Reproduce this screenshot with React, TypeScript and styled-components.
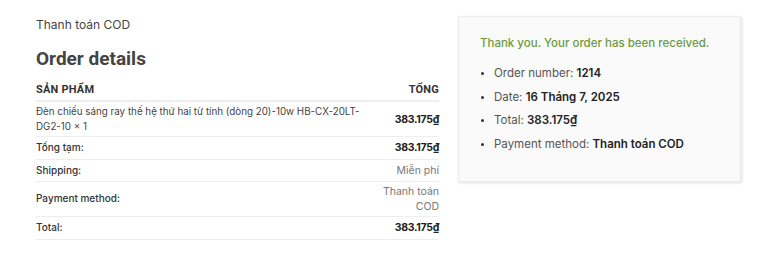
import styled, { createGlobalStyle } from 'styled-components';

const GlobalStyle = createGlobalStyle`
  html, body {
    margin: 0;
    padding: 0;
    background: #fff;
  }
  body {
    font-family: Inter, "Noto Sans", sans-serif;
    color: #333;
  }
`;

const Page = styled.div`
  display: flex;
  align-items: flex-start;
  gap: 19px;
  padding: 16px 0 0 36px;
`;

const Details = styled.section`
  width: 403px;
  padding-top: 1px;
  display: flex;
  flex-direction: column;
`;

const Method = styled.p`
  margin: 0;
  font-size: 12px;
  line-height: 16px;
  color: #444;
`;

const Heading = styled.h2`
  margin: 14px 0 0;
  font-family: Roboto, "Liberation Sans", sans-serif;
  font-size: 19px;
  line-height: 24px;
  font-weight: 700;
  color: #444;
`;

const Table = styled.table`
  width: 100%;
  margin-top: 12px;
  border-collapse: collapse;
`;

const HeadCell = styled.th<{ $right?: boolean }>`
  padding: 0 0 3px;
  text-align: ${({ $right }) => ($right ? 'right' : 'left')};
  font-family: Roboto, "Liberation Sans", sans-serif;
  font-size: 11px;
  line-height: 14px;
  font-weight: 700;
  text-transform: uppercase;
  letter-spacing: 0.2px;
  color: #333;
  border-bottom: 2px solid #eee;
`;

const Row = styled.tr`
  border-bottom: 1px solid #eee;
`;

const Cell = styled.td`
  padding: 2px 0;
  vertical-align: middle;
  font-size: 9.8px;
  line-height: 15px;
  color: #444;
`;

const Label = styled.th`
  padding: 2px 0;
  text-align: left;
  font-size: 10px;
  line-height: 17.5px;
  font-weight: 500;
  color: #333;
`;

const Value = styled.td<{ $bold?: boolean }>`
  padding: 2px 0;
  text-align: right;
  font-size: 10.5px;
  line-height: 15px;
  font-weight: ${({ $bold }) => ($bold ? 700 : 400)};
  letter-spacing: ${({ $bold }) => ($bold ? '-0.3px' : '0')};
  color: ${({ $bold }) => ($bold ? '#222' : '#777')};
  width: 70px;
`;

const Received = styled.aside`
  width: 283px;
  box-sizing: border-box;
  padding: 18px 21px 21px;
  background: #fafafa;
  border: 1px solid #ececec;
  box-shadow: 1px 1px 3px rgba(0, 0, 0, 0.12);
`;

const Thanks = styled.p`
  margin: 0;
  font-size: 11.5px;
  line-height: 16px;
  font-weight: 500;
  color: #6a9a43;
`;

const Facts = styled.ul`
  margin: 14px 0 0;
  padding-left: 14px;
  list-style: disc;
`;

const Fact = styled.li`
  font-size: 11.5px;
  line-height: 16px;
  color: #555;
  margin-bottom: 7.7px;

  &::marker {
    color: #333;
    font-size: 9px;
  }

  strong {
    font-weight: 600;
    color: #222;
  }
`;

const totals = [
  { label: 'Tổng tạm:', value: '383.175₫', bold: true },
  { label: 'Shipping:', value: 'Miễn phí', bold: false },
  { label: 'Payment method:', value: 'Thanh toán COD', bold: false },
  { label: 'Total:', value: '383.175₫', bold: true },
];

const facts = [
  { label: 'Order number:', value: '1214' },
  { label: 'Date:', value: '16 Tháng 7, 2025' },
  { label: 'Total:', value: '383.175₫' },
  { label: 'Payment method:', value: 'Thanh toán COD' },
];

const App = () => {
  return (
    <>
      <GlobalStyle />
      <Page>
        <Details>
          <Method>Thanh toán COD</Method>
          <Heading>Order details</Heading>
          <Table>
            <thead>
              <tr>
                <HeadCell>Sản phẩm</HeadCell>
                <HeadCell $right>Tổng</HeadCell>
              </tr>
            </thead>
            <tbody>
              <Row>
                <Cell>
                  Đèn chiếu sáng ray thế hệ thứ hai từ tính (dòng 20)-10w HB-CX-20LT-DG2-10 × 1
                </Cell>
                <Value $bold>383.175₫</Value>
              </Row>
            </tbody>
            <tfoot>
              {totals.map((t) => (
                <Row key={t.label}>
                  <Label>{t.label}</Label>
                  <Value $bold={t.bold}>{t.value}</Value>
                </Row>
              ))}
            </tfoot>
          </Table>
        </Details>
        <Received>
          <Thanks>Thank you. Your order has been received.</Thanks>
          <Facts>
            {facts.map((f) => (
              <Fact key={f.label}>
                {f.label} <strong>{f.value}</strong>
              </Fact>
            ))}
          </Facts>
        </Received>
      </Page>
    </>
  );
};

export default App;
